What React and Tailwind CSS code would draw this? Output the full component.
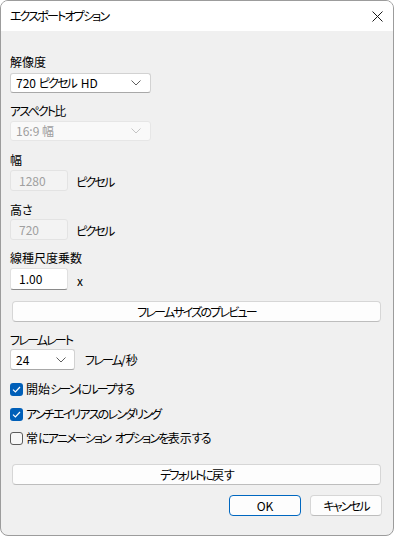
import React from 'react';

// Meiryo UI draws kana narrower than kanji; tighten kana runs only
function J({ children }) {
  const parts = String(children).split(/([\u3040-\u30ff]+)/);
  return (
    <>
      {parts.map((p, i) =>
        /^[\u3040-\u30ff]+$/.test(p) ? (
          <span key={i} className="tracking-[-1.8px]">{p}</span>
        ) : (
          <span key={i} className={p.startsWith(' ') ? 'ml-[2px]' : ''}>{p}</span>
        )
      )}
    </>
  );
}

const Chevron = ({ color = '#5f5f5f' }) => (
  <svg width="10" height="6" viewBox="0 0 10 6" fill="none">
    <path d="M0.5 0.5 L5 5 L9.5 0.5" stroke={color} strokeWidth="1" />
  </svg>
);

function Select({ value, width, disabled }) {
  return (
    <div
      className={
        'flex items-center justify-between pl-[5px] pr-[9px] h-5 rounded-[3px] border ' +
        (disabled
          ? 'bg-[#f9f9f9] border-[#e6e6e6] text-[#9e9e9e]'
          : 'bg-white border-[#d2d2d2] border-b-[#a8a8a8] text-black')
      }
      style={{ width }}
    >
      <span className="leading-[16px]"><J>{value}</J></span>
      <Chevron color={disabled ? '#c4c4c4' : '#5f5f5f'} />
    </div>
  );
}

function Field({ value, disabled, h = 'h-5' }) {
  return (
    <div
      className={
        'w-[58px] flex items-center px-[8px] rounded-[3px] border ' +
        h +
        ' ' +
        (disabled
          ? 'bg-[#f3f3f3] border-[#e3e3e3] text-[#a0a0a0]'
          : 'bg-white border-[#e0e0e0] border-b-[#8a8a8a] text-black')
      }
    >
      <span className="leading-[16px]">{value}</span>
    </div>
  );
}

function Check({ checked, label, className }) {
  return (
    <div className={'flex items-center h-4 ' + className}>
      {checked ? (
        <div className="w-[13px] h-[13px] rounded-[3px] bg-[#005fb8] flex items-center justify-center">
          <svg width="9" height="7" viewBox="0 0 9 7" fill="none">
            <path d="M1 3.6 L3.4 6 L8 1" stroke="white" strokeWidth="1.2" />
          </svg>
        </div>
      ) : (
        <div className="w-[13px] h-[13px] rounded-[3px] border border-[#5c5c5c] bg-[#f7f7f7]" />
      )}
      <span className="ml-[3px] leading-[16px]"><J>{label}</J></span>
    </div>
  );
}

function Button({ children, className }) {
  return (
    <div
      className={
        'flex items-center justify-center bg-[#fdfdfd] border border-[#d6d6d6] border-b-[#bdbdbd] rounded-[4px] ' +
        className
      }
    >
      <span className="leading-[16px]"><J>{children}</J></span>
    </div>
  );
}

function Label({ children, className = '' }) {
  return (
    <div className={'leading-[16px] ' + className}>
      <J>{children}</J>
    </div>
  );
}

export default function App() {
  return (
    <div className="w-[394px] h-[536px] bg-[#f0f0f0] border border-[#9c9c9c] rounded-[8px] overflow-hidden flex flex-col text-[12px] text-black [font-feature-settings:'palt'] font-['Noto_Sans_CJK_JP','Noto_Sans',sans-serif]">
      <div className="h-[30px] bg-white flex items-center justify-between pl-[9px] pr-[10px] shrink-0">
        <span className="leading-[16px]"><J>エクスポートオプション</J></span>
        <svg width="11" height="11" viewBox="0 0 11 11" fill="none">
          <path d="M0.5 0.5 L10.5 10.5 M10.5 0.5 L0.5 10.5" stroke="#1a1a1a" strokeWidth="1" />
        </svg>
      </div>

      <div className="flex flex-col px-[9px] pt-[23px]">
        <Label>解像度</Label>
        <div className="mt-[3px]">
          <Select value="720 ピクセル HD" width={141} />
        </div>

        <Label className="mt-[10px]">アスペクト比</Label>
        <div className="mt-[2px]">
          <Select value="16:9 幅" width={141} disabled />
        </div>

        <Label className="mt-[11px]">幅</Label>
        <div className="mt-[2px] flex items-center">
          <Field value="1280" disabled h="h-[21px]" />
          <span className="ml-[8px] mt-[2px] leading-[16px]"><J>ピクセル</J></span>
        </div>

        <Label className="mt-[11px]">高さ</Label>
        <div className="mt-[1px] flex items-center">
          <Field value="720" disabled h="h-[21px]" />
          <span className="ml-[8px] mt-[2px] leading-[16px]"><J>ピクセル</J></span>
        </div>

        <Label className="mt-[10px]">線種尺度乗数</Label>
        <div className="mt-[2px] flex items-center">
          <Field value="1.00" h="h-[22px]" />
          <span className="ml-[9px] mt-[3px] leading-[16px]">x</span>
        </div>

        <Button className="mt-[11px] ml-[2px] w-[369px] h-[21px]">フレームサイズのプレビュー</Button>

        <Label className="mt-[10px]">フレームレート</Label>
        <div className="mt-[1px] flex items-center">
          <div className="w-[65px] h-[21px] flex items-center justify-between pl-[5px] pr-[8px] rounded-[3px] bg-white border border-[#d2d2d2] border-b-[#a8a8a8]">
            <span className="leading-[16px]">24</span>
            <Chevron />
          </div>
          <span className="ml-[10px] leading-[16px]"><J>フレーム/秒</J></span>
        </div>

        <Check checked label="開始シーンにループする" className="mt-[11px]" />
        <Check checked label="アンチエイリアスのレンダリング" className="mt-[9px]" />
        <Check label="常にアニメーション オプションを表示する" className="mt-[8px]" />

        <Button className="mt-[18px] ml-[2px] w-[369px] h-[21px]">デフォルトに戻す</Button>

        <div className="mt-[10px] flex justify-end gap-[9px] mr-[2px]">
          <div className="w-[72px] h-[21px] flex items-center justify-center bg-[#fdfdfd] border border-[#0067c0] rounded-[4px]">
            <span className="leading-[16px]">OK</span>
          </div>
          <Button className="w-[72px] h-[21px]">キャンセル</Button>
        </div>
      </div>
    </div>
  );
}
